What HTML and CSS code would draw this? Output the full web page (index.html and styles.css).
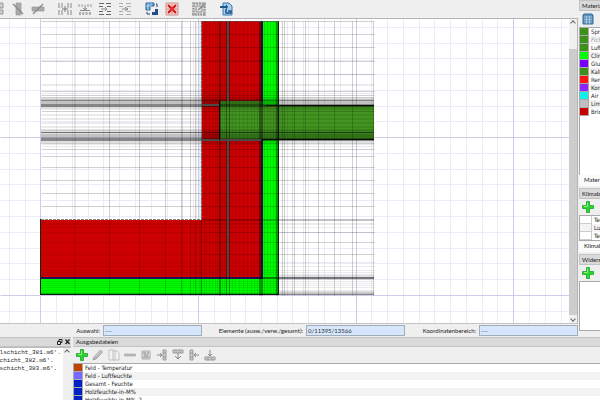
FILE: index.html
```html
<!DOCTYPE html>
<html lang="de">
<head>
<meta charset="utf-8">
<title>Konstruktion</title>
<link rel="stylesheet" href="styles.css">
</head>
<body>
<svg class="defs" aria-hidden="true">
  <defs>
    <symbol id="plus" viewBox="0 0 12 12"><path d="M4.500 .5h3v4h4v3h-4v4h-3v-4h-4v-3h4z" fill="#2fd42f" stroke="#17a52a" stroke-width=".8"/><path d="M5.500 2v3.500H2" fill="none" stroke="#8df08a"/></symbol>
    <symbol id="pencil" viewBox="0 0 12 12"><path d="M1 11l1-3 6.500-7 2 2L4 10z" fill="#b4b4b4" stroke="#999" stroke-width=".8"/><path d="M3 8l6-6" stroke="#ddd"/></symbol>
    <symbol id="table" viewBox="0 0 12 12"><path d="M2 1h8l1 1v9H1V2z" fill="#5d91bd" stroke="#356a97"/><path d="M2 4h8M2 6.500h8M2 9h8M4.500 3v8M7.500 3v8" stroke="#b5d2e8" stroke-width=".7"/></symbol>
    <pattern id="hatch" width="3" height="3" patternUnits="userSpaceOnUse"><path d="M0 3L3 0" stroke="#858585"/></pattern>
  </defs>
</svg>
<div class="app">
  <div class="upper">
    <main class="workspace">
      <header class="toolbar">
        <button class="tool first" aria-label="Element"><svg viewBox="0 0 14 14"><path d="M1 1h11v5H1zM1 8h11v4H1z" fill="#ccc" stroke="#999"/><path d="M7 3l3 3H4z" fill="#888"/></svg></button>
        <button class="tool" aria-label="Spalte entfernen"><svg viewBox="0 0 14 14"><path d="M5 1h5v12H5z" fill="#aaa" stroke="#999" stroke-width=".7"/><path d="M2 2l10 10" stroke="#888" stroke-width="1.300"/></svg></button>
        <button class="tool" aria-label="Zeile entfernen"><svg viewBox="0 0 14 14"><path d="M1 5h12v4H1z" fill="#aaa" stroke="#999" stroke-width=".7"/><path d="M2 12L12 2" stroke="#888" stroke-width="1.300"/></svg></button>
        <button class="tool gap" aria-label="Spalten teilen"><svg viewBox="0 0 14 14"><path d="M1 1v12M4 1v12M10 1v12M13 1v12" stroke="#aaa" stroke-width="1.500" stroke-dasharray="5 2"/><path d="M4 7h6M7 4v6" stroke="#777"/></svg></button>
        <button class="tool" aria-label="Spalte einfügen"><svg viewBox="0 0 14 14"><path d="M1 2v3M4 2v3M10 2v3M13 2v3" stroke="#c4c4c4" stroke-width="2"/><path d="M1 11.500h12" stroke="#aaa" stroke-width="3" stroke-dasharray="2 1.300"/><path d="M7 3v5M5 6l2 2 2-2M2 8.500h10" stroke="#888" fill="none"/></svg></button>
        <button class="tool" aria-label="Zeile einfügen"><svg viewBox="0 0 14 14"><path d="M1 1.500h5M8 1.500h5M1 4.500h4M9 4.500h4M1 9.500h4M9 9.500h4M1 12.500h5M8 12.500h5" stroke="#666"/><path d="M3 7h6M7 5l2 2-2 2" stroke="#888" fill="none"/></svg></button>
        <button class="tool" aria-label="Zeilen verbinden"><svg viewBox="0 0 14 14"><path d="M1 1.500h4M8 1.500h5M1 4.500h4M9 4.500h4M1 9.500h4M9 9.500h4M1 12.500h4M8 12.500h5" stroke="#aaa"/><path d="M4 7h6M7 5l3 2-3 2" stroke="#888" fill="none"/></svg></button>
        <button class="tool gap" aria-label="Zuweisung tauschen"><svg viewBox="0 0 14 14"><path d="M1 1h8v3H5v4H1z" fill="#5ea4d6" stroke="#2d6393"/><path d="M3 1v7M6 1v3M1 4h5" stroke="#cde5f7" stroke-width=".7"/><path d="M13 7v6H7v-3h3V7z" fill="#204f89"/><path d="M11 2h1v3M2 10v2h3" fill="none" stroke="#20407a"/></svg></button>
        <button class="tool" aria-label="Zuweisung löschen"><svg viewBox="0 0 14 14"><path d="M1 1h12v12H1z" fill="#f3d5d0" stroke="#c98f8b"/><path d="M3 3l8 8M11 3l-8 8" stroke="#d40f10" stroke-width="2"/><path d="M7 2v10M2 7h10" stroke="#e2584f" stroke-width=".7"/></svg></button>
        <button class="tool gap" aria-label="Bearbeiten"><svg viewBox="0 0 14 14"><path d="M1.500 1.500h11v11h-11z" fill="none" stroke="#999" stroke-width="2.500" stroke-dasharray="2 .7"/><path d="M4 4h6v6H4z" fill="#e6e6e6" stroke="#888"/><path d="M6 8l7-6" stroke="#888" stroke-width="1.500"/></svg></button>
        <button class="tool gap" aria-label="Exportieren"><svg viewBox="0 0 14 14"><path d="M4 1h6l3 3v9H4z" fill="#a6cff0" stroke="#3f78ab"/><path d="M1 4h6v-2l2 3-2 3V6H1z" fill="#1f5689"/><path d="M7 7v4h5V9H9" fill="none" stroke="#1f5689" stroke-width="1.500"/></svg></button>
      </header>
      <section class="viewport" aria-label="Zeichnung">
        <svg class="drawing" viewBox="0 19 569 304" preserveAspectRatio="xMinYMin slice" role="img" aria-label="Konstruktionsdetail mit Rechengitter">
          <g transform="translate(.5 .5)" fill="none">
            <path stroke="#ebebf8" d="M9 18V324M25 18V324M56 18V324M72 18V324M88 18V324M103 18V324M119 18V324M135 18V324M151 18V324M167 18V324M182 18V324M214 18V324M230 18V324M245 18V324M261 18V324M277 18V324M292 18V324M308 18V324M324 18V324M340 18V324M371 18V324M387 18V324M403 18V324M419 18V324M434 18V324M450 18V324M466 18V324M482 18V324M497 18V324M529 18V324M545 18V324M561 18V324M0 27H569M0 43H569M0 58H569M0 74H569M0 90H569M0 106H569M0 121H569M0 153H569M0 169H569M0 184H569M0 200H569M0 216H569M0 232H569M0 248H569M0 263H569M0 279H569M0 311H569"/>
            <path stroke="#cdcdea" d="M40 18V324M198 18V324M356 18V324M513 18V324M0 137H569M0 295H569"/>
          </g>
          <g>
            <path fill="#cc0000" d="M202 21h59v257H41v-58h161z"/>
            <path fill="#00fa00" d="M263 21h16v274H41v-16h222z"/>
            <path fill="#2d1470" d="M261 21h2v258H41v-2h220z"/>
            <path fill="#429420" d="M220 101h42v4h112v35H220z"/>
          </g>
          <g transform="translate(.5 .5)" fill="none" stroke="#000">
            <path stroke-opacity=".18" d="M41 21H374M41 34H374M41 47H374M41 61H374M41 74H374M41 91H374M41 95H374M41 111H374M41 149H374M41 156H374M41 167H374M41 180H374M41 193H374M41 206H374M202 232H374M202 242H374M202 254H374M109 21V295M139 21V295M165 21V295M181 21V295M190 21V295M195 21V295M282 21V295M284 21V295M294 21V295M305 21V295M318 21V295M334 21V295M352 21V295M373 21V295"/>
            <path stroke-opacity=".08" d="M41 60H374M41 84H374M41 85H374M41 93H374M41 97H374M41 109H374M41 114H374M41 115H374M41 118H374M41 119H374M41 122H374M41 123H374M41 126H374M41 127H374M41 130H374M41 143H374M41 144H374M41 146H374M41 223H374M41 224H374M41 227H374M41 232H202M41 242H202M41 254H202M41 262H374M41 266H374M41 270H374M41 272H374M41 274H374M41 281H374M41 283H374M41 285H374M41 287H374M41 290H374M41 292H374M74 21V295M75 21V295M182 21V295M193 21V295M196 21V295M199 21V295M200 21V295M287 21V295M292 21V295M303 21V295"/>
            <path stroke-opacity=".09" d="M204 21V295M206 21V295M209 21V295M212 21V295M215 21V295M217 21V295M222 21V295M224 21V295M232 21V295M235 21V295M239 21V295M243 21V295M247 21V295M251 21V295M254 21V295M257 21V295M264 21V295M267 21V295M270 21V295M273 21V295M275 21V295"/>
            <path stroke-opacity=".38" d="M201 21V295M219 21V295M220 21V295M226 21V295M229 21V295M259 21V295M260 21V295M261 21V295M262 21V295M276 21V295M277 21V295"/>
          </g>
          <path fill="#000" fill-opacity=".24" d="M41 99h333v8H41zM41 134h333v7H41zM202 219h172v2H202zM41 277h333v2H41zM41 293h333v2H41z"/>
          <path fill="#000" fill-opacity=".12" d="M41 97h333v2H41zM41 107h333v2H41zM41 129h333v5H41zM41 141h333v3H41zM279 275h95v5h-95zM279 291h95v2h-95z"/>
          <path fill="#000" fill-opacity=".3" d="M41 100h333v1H41zM41 104h333v3H41zM41 138h333v3H41zM263 277h111v2H263zM279 294h95v1h-95z"/>
          <path fill="#000" fill-opacity=".5" d="M41 132h333v1H41z"/>
          <path fill="#4b4848" d="M227 21h2v80h-2zM227 141h2v136h-2zM202 104h18v2h-18zM202 139h59v2h-59z"/>
          <path fill="#000" fill-opacity=".85" d="M278 21h1v274h-1zM266 105h108v1H266zM262 139h112v1H262zM40 219h1v76h-1zM41 294h238v1H41zM219 101h1v39h-1z"/>
          <path d="M201.500 21V101M201.500 141V220M41 219.500H202M202 21.500H279" fill="none" stroke="#555" stroke-opacity=".7" stroke-dasharray="3 1"/>
        </svg>
        <div class="scroll" aria-hidden="true"><span class="arrow up"></span><span class="thumb"></span><span class="arrow down"></span></div>
      </section>
      <div class="status">
        <label for="sel">Auswahl:</label><input id="sel" value="---" readonly>
        <label for="elem">Elemente (ausw./verw./gesamt):</label><input id="elem" value="0/11395/13566" readonly>
        <label for="coord">Koordinatenbereich:</label><input id="coord" value="---" readonly>
      </div>
    </main>
    <aside class="side">
      <section class="panel materials">
        <h2>Materialien</h2>
        <div class="panel-tools"><button aria-label="Materialdatenbank"><svg viewBox="0 0 12 12"><use href="#table"/></svg></button></div>
        <ul class="list">
          <li><i class="moss"></i>Sprossen</li>
          <li class="muted"><i class="moss"></i>Fichte</li>
          <li><i class="moss"></i>Luftschicht</li>
          <li><i class="lime"></i>Climate</li>
          <li><i class="violet"></i>Glue</li>
          <li><i class="moss"></i>Kalkputz</li>
          <li><i class="red"></i>Remmers</li>
          <li><i class="purple"></i>Konstruktion</li>
          <li><i class="cyan"></i>Air gap</li>
          <li><i class="silver"></i>Lime</li>
          <li><i class="brick"></i>Brick</li>
        </ul>
        <div class="tab">Materialien</div>
      </section>
      <section class="panel climate">
        <h2>Klimabedingungen</h2>
        <div class="panel-tools"><button aria-label="Klima hinzufügen"><svg viewBox="0 0 12 12"><use href="#plus"/></svg></button><button aria-label="Klima bearbeiten"><svg viewBox="0 0 12 12"><use href="#pencil"/></svg></button></div>
        <ul class="list boxed"><li><i></i>Temperatur</li><li><i></i>Luftfeuchte</li><li><i></i>Temperatur</li></ul>
        <div class="tab">Klimabedingungen</div>
      </section>
      <section class="panel resist">
        <h2>Widerstände</h2>
        <div class="panel-tools"><button aria-label="Widerstand hinzufügen"><svg viewBox="0 0 12 12"><use href="#plus"/></svg></button><button aria-label="Widerstand bearbeiten"><svg viewBox="0 0 12 12"><use href="#pencil"/></svg></button></div>
        <ul class="list"></ul>
      </section>
    </aside>
  </div>
  <div class="lower">
    <section class="log">
      <div class="dock-title"><svg viewBox="0 0 16 8"><path d="M2.500 3.500h3v3h-3zM4 3V1.500h3v3H6" fill="none" stroke="#222"/><path d="M10.500 1.500l4 4.500M14.500 1.500l-4 4.500" stroke="#222" stroke-width="1.300"/></svg></div>
      <div class="log-body">
        <pre>elschicht_381.m6'.
schicht_382.m6'.
rschicht_383.m6'.</pre>
        <div class="scroll" aria-hidden="true"><span class="arrow up"></span></div>
      </div>
    </section>
    <section class="outputs">
      <h2 class="dock-title">Ausgabedateien</h2>
      <div class="out-tools">
        <button aria-label="Hinzufügen"><svg viewBox="0 0 12 12"><use href="#plus"/></svg></button>
        <button aria-label="Bearbeiten"><svg viewBox="0 0 12 12"><use href="#pencil"/></svg></button>
        <button aria-label="Kopieren"><svg viewBox="0 0 12 12"><path d="M1 1h5l1 1v9H1zM5 2h4l2 2v7H5z" fill="#f2f2f2" stroke="#c2c2c2"/></svg></button>
        <button aria-label="Entfernen"><svg viewBox="0 0 12 12"><path d="M.5 5h11v2H.5z" fill="#bbb" stroke="#aaa" stroke-width=".7"/></svg></button>
        <button aria-label="Auswahl"><svg viewBox="0 0 12 12"><path d="M2 2h8v8H2z" fill="#ddd" stroke="#aaa"/><path d="M3 4h3M7 4h2M4 6h4M3 8h6" stroke="#888"/></svg></button>
        <button aria-label="Zuweisen links"><svg viewBox="0 0 12 12"><path d="M7 1h3v10H7zM7 4h3M7 8h3" fill="#ccc" stroke="#999"/><path d="M1 6h5M4 4l2 2-2 2" stroke="#888" fill="none"/></svg></button>
        <button aria-label="Zuweisen oben"><svg viewBox="0 0 12 12"><path d="M1 1h10v3H1zM4 1v3M8 1v3" fill="#ccc" stroke="#999"/><path d="M6 4v6M3 7l3 3 3-3" stroke="#888" fill="none"/></svg></button>
        <button aria-label="Zuweisen rechts"><svg viewBox="0 0 12 12"><path d="M2 1h3v10H2zM2 4h3M2 8h3" fill="#ccc" stroke="#999"/><path d="M11 6H6M8 4L6 6l2 2" stroke="#888" fill="none"/></svg></button>
        <button aria-label="Zuweisen unten"><svg viewBox="0 0 12 12"><path d="M1 8h10v3H1zM4 8v3M8 8v3" fill="#ccc" stroke="#999"/><path d="M6 1v6M4 5l2 2 2-2" stroke="#888" fill="none"/></svg></button>
      </div>
      <ul class="list files">
        <li><i class="rust"></i>Feld - Temperatur</li>
        <li><i class="lavender"></i>Feld - Luftfeuchte</li>
        <li><i class="blue"></i>Gesamt - Feuchte</li>
        <li><i class="blue"></i>Holzfeuchte-in-M%</li>
        <li><i class="blue"></i>Holzfeuchte-in-M%_2</li>
      </ul>
    </section>
  </div>
</div>
</body>
</html>
```
FILE: styles.css
```css
* { box-sizing: border-box; }
body { margin: 0; background: #efefef; color: #222; font: 6px/8px Lato, "Liberation Sans", sans-serif; }
button { border: 0; padding: 0; background: none; }
h2 { margin: 0; font: inherit; }
ul { margin: 0; padding: 0; list-style: none; }
svg { display: block; }
.defs { position: absolute; width: 0; height: 0; }
.app { display: flex; flex-direction: column; height: 100vh; overflow: hidden; }
.upper { flex: 1; display: flex; gap: 1px; min-height: 0; }
.workspace { flex: 1; min-width: 0; display: flex; flex-direction: column; }

.toolbar { display: flex; align-items: center; gap: 6px; height: 18px; overflow: hidden; }
.tool { width: 14px; flex: none; }
.tool svg { width: 14px; height: 14px; }
.tool.first { margin-left: -9px; }
.tool.gap { margin-left: 7px; }

.viewport { flex: 1; min-height: 0; display: flex; background: #fff; border-top: 1px solid #b5b5b8; border-right: 1px solid #b5b5b8; border-bottom: 1px solid #c4c4c4; }
.drawing { flex: 1; min-width: 0; height: 100%; }
.scroll { display: flex; flex-direction: column; width: 8px; flex: none; background: #f0f0f0; }
.thumb { flex: 1; margin-top: 22px; background: #cdcdcd; }
.arrow { height: 8px; display: grid; place-items: center; }
.arrow::before { content: ""; width: 3px; height: 3px; border: solid #666; border-width: 1px 0 0 1px; }
.arrow.up::before { transform: rotate(45deg); }
.arrow.down::before { transform: rotate(225deg); }

.status { display: grid; grid-template-columns: 103fr 99fr 104fr 99fr 74fr 99fr; align-items: center; height: 13px; }
.status label { text-align: right; padding-right: 3px; white-space: nowrap; }
.status input { width: 100%; height: 11px; border: 1px solid #a3adb8; background: #d6e7fd; padding: 0 1px; font: inherit; color: #333; border-radius: 0; }

.side { width: 21px; flex: none; overflow: hidden; white-space: nowrap; padding-bottom: 6px; display: flex; flex-direction: column; }
.panel { display: flex; flex-direction: column; }
.panel h2 { height: 11px; padding: 1px 2px; border: 1px solid #c2c2c2; border-right: 0; background: #d9d9d9; }
.panel-tools { height: 16px; display: flex; align-items: center; gap: 7px; padding-left: 3px; }
.panel-tools svg { width: 12px; height: 12px; }
.list { background: #fff; border: solid #aaa; border-width: 1px 0 0 1px; overflow: hidden; font-family: "DejaVu Sans Condensed", "DejaVu Sans", sans-serif; }
.list li { display: flex; height: 8px; gap: 2px; white-space: nowrap; }
.list li:nth-child(even) { background: #f3f3f3; }
.list i { width: 9px; flex: none; border: 1px solid #aaa; border-width: 0 1px 1px 0; }
.materials .list { height: 148px; }
.muted { color: #999; font-style: italic; }
.tab { height: 11px; padding: 1px 5px; background: #fafafa; margin-bottom: 2px; }
.boxed { border-bottom: 1px solid #aaa; }
.boxed i { width: 12px; border-color: #ccc; }
.resist { flex: 1; }
.resist .list { flex: 1; border-bottom: 1px solid #aaa; }
.moss { background: #3f8f1d; } .lime { background: #0f0; } .violet { background: #7800ff; }
.red { background: #fd1414; } .purple { background: #8b24fa; } .cyan { background: #12eef2; }
.silver { background: #c0c0c0; } .brick { background: #c70000; } .rust { background: #bf4300; }
.lavender { background: #7569ff; } .blue { background: #0022c6; }

.lower { display: flex; gap: 2px; height: 63px; flex: none; }
.dock-title { height: 10px; padding: 0 3px; background: #d9d9d9; border: solid #c2c2c2; border-width: 1px 0; flex: none; }
.log { width: 71px; flex: none; display: flex; flex-direction: column; }
.log .dock-title { display: flex; justify-content: flex-end; padding: 0; }
.log .dock-title svg { width: 16px; height: 8px; }
.log-body { flex: 1; display: flex; background: #fff; border-top: 1px solid #bbb; overflow: hidden; }
.log pre { flex: 1; margin: 0 0 0 -4px; padding-top: 1px; font: 6px/8px "Liberation Mono", monospace; overflow: hidden; }
.outputs { flex: 1; min-width: 0; display: flex; flex-direction: column; }
.out-tools { display: flex; align-items: center; gap: 4px; height: 16px; padding-left: 3px; flex: none; }
.out-tools button, .out-tools svg { width: 12px; height: 12px; }
.files { flex: 1; }
```
